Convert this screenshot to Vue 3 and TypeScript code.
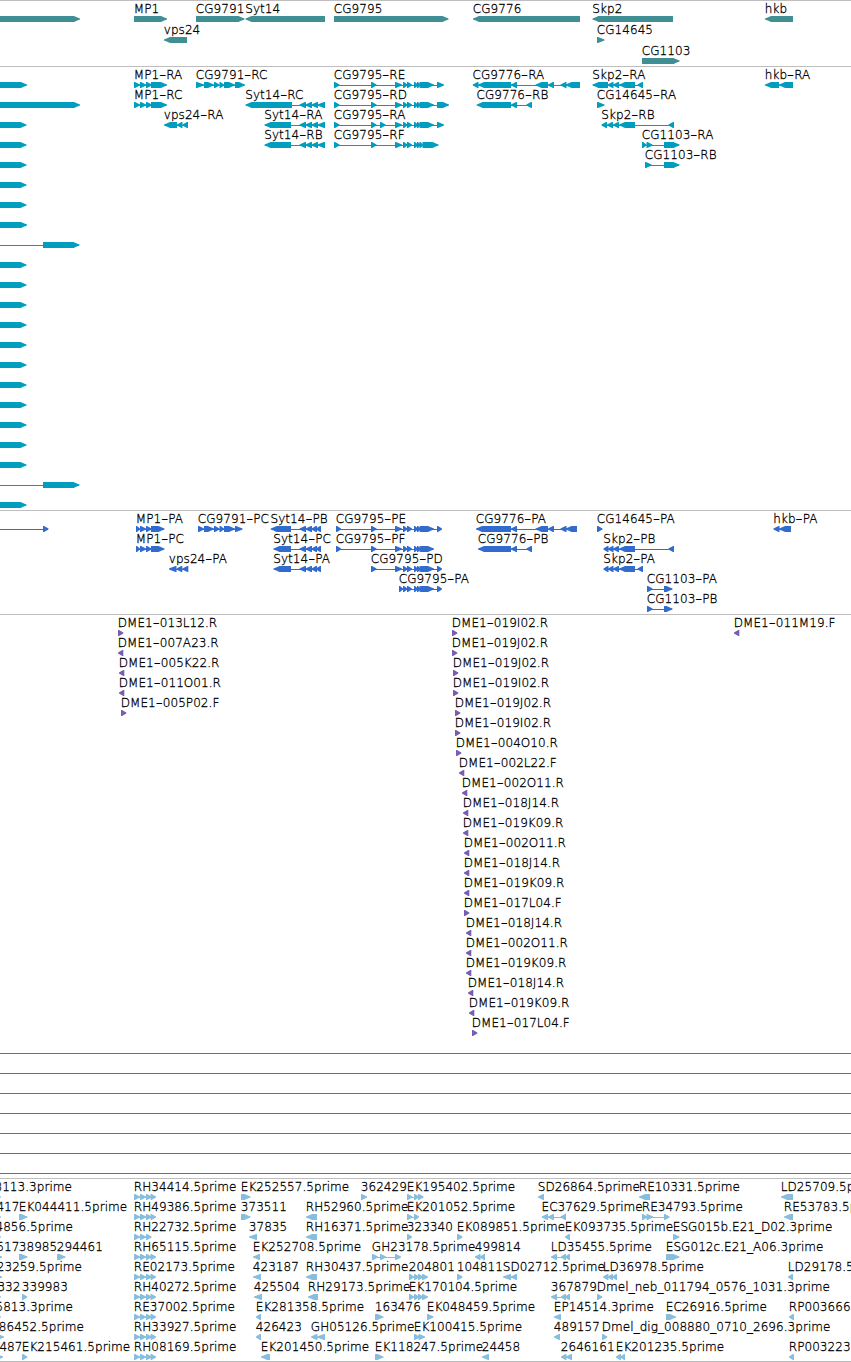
<script setup lang="ts">
type Segment = { points: string }
type Feature = {
  x: number
  y: number
  parts: { text: string; dash: boolean }[]
  anchor: 'start' | 'end'
  segments: Segment[]
  from: number
  to: number
}
type Track = { name: string; height: number; features: Feature[]; guides: number[] }

/* Outline of one exon: a block that tapers to a point in the direction of the strand. */
function outline(a: number, b: number, y: number, dir: string): string {
  const w = b - a
  const pts: number[][] =
    w <= 8
      ? [[0, 0], [1, 0], [w, 2.6], [w, 3.4], [1, 6], [0, 6]]
      : [[0, 0], [w - 6, 0], [w - 2, 1.7], [w, 2.6], [w, 3.4], [w - 2, 4.3], [w - 6, 6], [0, 6]]
  return pts
    .map(([px, py]) => `${(dir === '>' ? a + px : b - px).toFixed(2)},${(y + py).toFixed(2)}`)
    .join(' ')
}

/* Each line: row | label | strand | exon ranges | optional right edge of the label */
function parse(source: string, step: number): Feature[] {
  return source
    .trim()
    .split('\n')
    .map((line) => {
      const [row, label, dir, ranges, end] = line.trim().split('|')
      const y = Number(row) * step + 15
      const pairs = ranges.split(',').map((r) => r.split(':').map(Number))
      const from = pairs[0][0]
      const to = pairs[pairs.length - 1][1]
      return {
        x: end ? Number(end) : Math.max(from, 0) - 0.2,
        y,
        parts: label
          .split(/(-)/)
          .filter(Boolean)
          .map((text) => ({ text, dash: text === '-' })),
        anchor: end ? 'end' : 'start',
        segments: pairs.map(([a, b]) => ({ points: outline(a, b, y, dir) })),
        from,
        to,
      } as Feature
    })
}

const mp1 = '134:140,140:146,146:152,151:167'
const sytTail = '299.5:306,305.5:312,311.5:318,317.5:325'
const sytTailP = '299.5:306,305.5:312,311.5:317,316:321'
const mid = '395:402,403:407.5,407:412,414:418,417:420.5,419.5:423'
const est = '134:140,140:146,146:151.5,150.5:156'

const genes = `
0||>|-20:80
0|MP1|>|134:167
1|vps24|<|164:187
0|CG9791|>|196:244.5
0|Syt14|<|245.5:325
0|CG9795|>|334:448.5
0|CG9776|<|473:580
0|Skp2|<|592.5:673
1|CG14645|>|597:604.5
2|CG1103|>|642:679.5
0|hkb|<|765:793`

const leftRows = Array.from({ length: 22 }, (_, i) =>
  i === 1
    ? '1||>|-20:80'
    : i === 8 || i === 20
      ? `${i}||>|-30:-20,43:79.5`
      : `${i}||>|-20:${i === 0 || i === 7 ? 27 : 26.5}`,
).join('\n')

const transcripts = `${leftRows}
0|MP1-RA|>|${mp1}
1|MP1-RC|>|${mp1}
2|vps24-RA|<|164:177,177:182.5,182.5:188
0|CG9791-RC|>|196:204,204:214,214:219.5,219.5:224,224:235,235:245
1|Syt14-RC|<|245.5:292,${sytTail}
2|Syt14-RA|<|264.5:291,${sytTail}
3|Syt14-RB|<|264.5:291,${sytTail}
0|CG9795-RE|>|334:339.5,371:376.5,${mid},421:434,437:444
1|CG9795-RD|>|334:339.5,371:376.5,${mid},421:434,437:449
2|CG9795-RA|>|334:339.5,371:376.5,380:385.5,${mid},421:434,437:444
3|CG9795-RF|>|334:339.5,371:376.5,${mid},422.5:438.5
0|CG9776-RA|<|472.8:478.5,478:511,511:517,535.5:548,548:554,560.5:566.5,565.5:580
1|CG9776-RB|<|476.7:511,511:517,526.5:532
0|Skp2-RA|<|592.5:608,607.5:613.5,613:619,619:635,637.5:643
1|CG14645-RA|>|597:604.5
2|Skp2-RB|<|601.5:607,607:613,613:619,619:635,668.5:674
3|CG1103-RA|>|642:646.5,646.5:652.5,664:679.5
4|CG1103-RB|>|645:651.5,664:679.5
0|hkb-RA|<|765:779,779:793`

const proteins = `
0||>|-30:-20,43:48.5
0|MP1-PA|>|136:140,140:146,146:151.5,151:164.5
1|MP1-PC|>|136:140,140:146,146:151.5,151:164.5
2|vps24-PA|<|169:176.5,176.5:182.3,182.3:188.3
0|CG9791-PC|>|198:204,204:214,214:219.5,219.5:224,224:235,235:242.5
0|Syt14-PB|<|270.7:291,${sytTailP}
1|Syt14-PC|<|273.5:291,${sytTailP}
2|Syt14-PA|<|273.5:291,${sytTailP}
0|CG9795-PE|>|336:341,371:376.5,${mid},421:434,437:442
1|CG9795-PF|>|336:341,371:376.5,${mid},421:434
2|CG9795-PD|>|371:376.5,${mid},421:434,437:442
3|CG9795-PA|>|399:403,403:407.5,407:412,414:418,417:420.5,419.5:423,421:434,437:442
0|CG9776-PA|<|476:511,511:517,535.5:548,548:554,560.5:566.5,565.5:577
1|CG9776-PB|<|478:511,511:517,526.5:532
0|CG14645-PA|>|597:602.5
1|Skp2-PB|<|603.5:608.5,608:613.5,613:619,619:635,668.5:674
2|Skp2-PA|<|603.5:608.5,608:613.5,613:619,619:635,637.5:643
3|CG1103-PA|>|647:652.5,664:672.5
4|CG1103-PB|>|647:652.5,664:672.5
0|hkb-PA|<|773.5:779.5,779:791`

const clone = (row: number, name: string, dir: string, x: number) =>
  `${row}|DME1-${name}|${dir}|${x}:${x + 5.3}`

const clones = [
  clone(0, '013L12.R', '>', 118),
  clone(1, '007A23.R', '<', 118),
  clone(2, '005K22.R', '<', 119),
  clone(3, '011O01.R', '<', 119),
  clone(4, '005P02.F', '>', 121),
  clone(0, '019I02.R', '>', 452),
  clone(1, '019J02.R', '>', 452),
  clone(2, '019J02.R', '>', 453),
  clone(3, '019I02.R', '>', 453),
  clone(4, '019J02.R', '>', 455),
  clone(5, '019I02.R', '>', 455),
  clone(6, '004O10.R', '>', 456),
  clone(7, '002L22.F', '<', 459),
  clone(8, '002O11.R', '<', 462),
  clone(9, '018J14.R', '<', 463),
  clone(10, '019K09.R', '<', 463),
  clone(11, '002O11.R', '<', 464),
  clone(12, '018J14.R', '<', 464),
  clone(13, '019K09.R', '<', 464),
  clone(14, '017L04.F', '>', 464),
  clone(15, '018J14.R', '<', 466),
  clone(16, '002O11.R', '<', 466),
  clone(17, '019K09.R', '<', 466),
  clone(18, '018J14.R', '<', 468),
  clone(19, '019K09.R', '<', 469),
  clone(20, '017L04.F', '>', 472),
  clone(0, '011M19.F', '<', 734),
].join('\n')

const ests = `
0|8113.3prime|>|-8:1|72
1|417|>|-8:1|19.5
2|4856.5prime|>|-8:1|73
3|517|>|-8:2|19.5
4|23259.5prime|>|-8:2|82
5|332|>|-8:1|20.5
6|5813.3prime|>|-8:1|73
7|86452.5prime|>|-8:4|84
8|487|>|-8:3|22.5
1|EK044411.5prime|>|19:27.5
3|38985|>|19:27.5
3|294461|>|57:65.5
5|339983|>|22:27.3
8|EK215461.5prime|>|22:27.3
0|RH34414.5prime|>|${est}
1|RH49386.5prime|>|${est}
2|RH22732.5prime|>|134:140,140:146,146:151.5
3|RH65115.5prime|>|${est}
4|RE02173.5prime|>|${est}
5|RH40272.5prime|>|${est}
6|RE37002.5prime|>|${est}
7|RH33927.5prime|>|${est}
8|RH08169.5prime|>|${est}
0|EK252557.5prime|>|241:250.5
1|373511|>|241:250.5
2|37835|<|249:257
3|EK252708.5prime|<|253:260
4|423187|<|253:261
5|425504|<|254:262
6|EK281358.5prime|<|256:261
7|426423|<|256:261
8|EK201450.5prime|<|261:270
0|362429|>|361:367
1|RH52960.5prime|<|306:317
2|RH16371.5prime|<|306:317
3|GH23178.5prime|>|372:378,380:386,395:401
4|RH30437.5prime|<|306:317
5|RH29173.5prime|<|308:318
6|163476|>|375:383.5
7|GH05126.5prime|<|311:317.5,317:325
8|EK118247.5prime|>|375:383.5
0|EK195402.5prime|>|407:412.5,414:419,418:423.5
1|EK201052.5prime|>|407:412.5,414:419
2|323340|>|407:412
4|204801|>|409:414,414:419,418:423,422:428
5|EK170104.5prime|>|409:414,414:419,418:423,422:428
7|EK100415.5prime|>|414:419.5,418.5:425
2|EK089851.5prime|>|457:462.5
3|499814|<|475:480.5,480:485
4|104811|>|457:462.5
6|EK048459.5prime|>|427:433.5
8|24458|<|482:489
0|SD26864.5prime|<|538:544
1|EC37629.5prime|<|541.7:548,548:554,560.5:566
2|EK093735.5prime|<|565:570
3|LD35455.5prime|<|551:557,561:566,565:570
4|SD02712.5prime|<|503:511,511:517
5|367879|<|551:557,561:566,565:570
6|EP14514.3prime|<|554:561
7|489157|<|554:560
8|2646161|<|561:566.5,566:572
0|RE10331.5prime|<|639:650
1|RE34793.5prime|>|642:647,646.5:653,664:669.5
2|ESG015b.E21_D02.3prime|>|673:679.5
3|ESG012c.E21_A06.3prime|>|666:679.5
4|LD36978.5prime|<|603:608.5,608:613,612.5:617
5|Dmel_neb_011794_0576_1031.3prime|>|597:602.3
6|EC26916.5prime|>|666:676
7|Dmel_dig_008880_0710_2696.3prime|>|602:607.3
8|EK201235.5prime|<|616:621,620.5:625
0|LD25709.5prime|<|781:793
1|RE53783.5prime|<|784:793
4|LD29178.5prime|<|788:793
6|RP003666.5prime|<|789:794
8|RP003223.5prime|<|789:794`

const tracks: Track[] = [
  { name: 'gene', height: 66, features: parse(genes, 21), guides: [] },
  { name: 'transcript', height: 444, features: parse(transcripts, 20), guides: [] },
  { name: 'protein', height: 104, features: parse(proteins, 20), guides: [] },
  {
    name: 'clone',
    height: 564,
    features: parse(clones, 20),
    guides: [438, 458, 478, 498, 518, 538, 558],
  },
  { name: 'est', height: 183, features: parse(ests, 20), guides: [] },
]
</script>

<template>
  <main class="browser">
    <section
      v-for="track in tracks"
      :key="track.name"
      class="track"
      :class="track.name"
    >
      <svg class="canvas" width="851" :height="track.height - 1">
        <rect v-for="g in track.guides" :key="g" x="0" :y="g" width="851" height="1" />
        <g v-for="(f, i) in track.features" :key="i">
          <rect
            v-if="f.segments.length > 1"
            :x="f.from + 1"
            :y="f.y + 3"
            :width="f.to - f.from - 2"
            height="1"
          />
          <polygon v-for="(s, j) in f.segments" :key="j" :points="s.points" />
          <text
            v-if="f.parts.length"
            class="label"
            :x="f.x"
            :y="f.y - 3"
            :text-anchor="f.anchor"
          ><tspan
            v-for="(p, k) in f.parts"
            :key="k"
            :textLength="p.dash ? 7 : undefined"
            :lengthAdjust="p.dash ? 'spacingAndGlyphs' : undefined"
          >{{ p.text }}</tspan></text>
        </g>
      </svg>
    </section>
  </main>
</template>

<style>
html,
body {
  background: #fff;
  overflow: hidden;
}
</style>

<style scoped>
.browser {
  display: flex;
  flex-direction: column;
  width: 851px;
  height: 1362px;
  overflow: hidden;
  background: #fff;
}
.track {
  flex: none;
  border-top: 1px solid #bebebe;
}
.track:last-child {
  border-bottom: 1px solid #bebebe;
}
.canvas {
  display: block;
}
.label {
  fill: #000;
  stroke: #000;
  stroke-width: 0.3px;
  font: 200 12px 'DejaVu Sans', 'DejaVu Sans Light', 'Liberation Sans', sans-serif;
  letter-spacing: 0.05px;
}
.gene {
  fill: #408f94;
}
.transcript {
  fill: #009dbf;
}
.protein {
  fill: #326bce;
}
.clone {
  fill: #775eb0;
}
.est {
  fill: #87bddd;
}
</style>
